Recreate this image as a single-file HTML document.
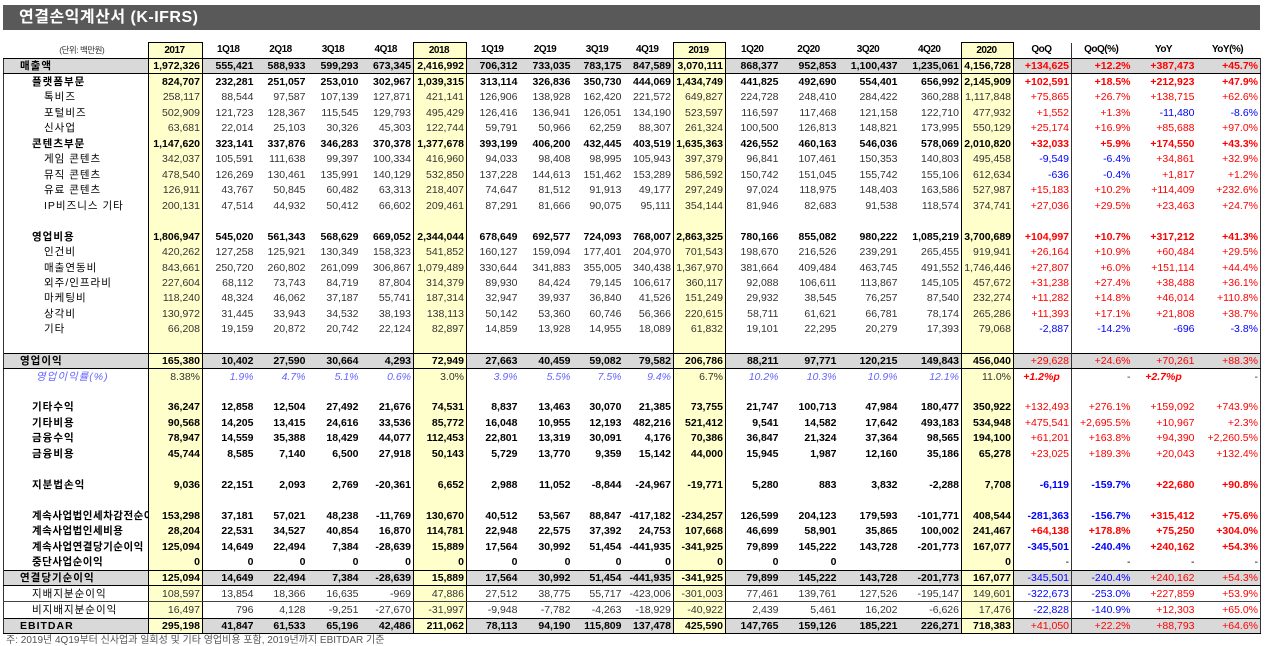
<!DOCTYPE html>
<html><head><meta charset="utf-8"><style>
body{margin:0;width:1266px;height:637px;background:#fff;overflow:hidden;position:relative;font-family:"Liberation Sans","Noto Sans CJK KR",sans-serif;}
.title{position:absolute;left:3px;top:5px;width:1257px;height:25px;background:#595959;color:#fff;font-weight:bold;font-size:16px;line-height:25px;padding-left:16px;box-sizing:border-box;letter-spacing:0.5px}
table{position:absolute;left:3px;top:42px;border-collapse:collapse;table-layout:fixed;width:1257px;font-size:10.5px;}
td{height:15.47px;padding:0 2px 0 0;text-align:right;white-space:nowrap;overflow:hidden;line-height:14px;color:#333}
tr.h td{height:15px;font-weight:bold;text-align:center;color:#000;font-size:10px;letter-spacing:-0.5px}
td:first-child{text-align:left;color:#000;letter-spacing:1px}
td:nth-child(2),td:nth-child(7),td:nth-child(12),td:nth-child(17){background:#ffffcc;border-left:1px solid #000;border-right:1px solid #000}
td:nth-child(19){border-left:1px solid #333}
td:last-child{border-right:1px solid #333}
td:first-child{border-left:1px solid #333}
tr.b td{font-weight:bold;color:#000}
tr.g td{background:#d9d9d9;border-top:1.5px solid #000;border-bottom:1.5px solid #000;font-weight:bold;color:#000;height:14.2px}
tr.g td:nth-child(2),tr.g td:nth-child(7),tr.g td:nth-child(12),tr.g td:nth-child(17){background:#ffffcc}
tr.g td:first-child{padding-left:16px}
tr.l td{border-bottom:1px solid #444;height:14.97px}
.i1{padding-left:28px}.i2{padding-left:40px}
.r{color:#f00!important}.bl{color:#00f!important}
tr.m td{font-style:italic;color:#66f}
tr.m td:nth-child(2),tr.m td:nth-child(7),tr.m td:nth-child(12),tr.m td:nth-child(17){color:#333;font-style:normal}
.foot{position:absolute;left:6px;top:631px;font-size:10px;color:#555}
</style></head><body>
<div class="title">연결손익계산서 (K-IFRS)</div>
<table>
<colgroup><col style="width:145px"><col style="width:54px"><col style="width:53px"><col style="width:52px"><col style="width:53px"><col style="width:53px"><col style="width:53px"><col style="width:53px"><col style="width:53px"><col style="width:51px"><col style="width:50px"><col style="width:52px"><col style="width:55px"><col style="width:58px"><col style="width:61px"><col style="width:62px"><col style="width:52px"><col style="width:58px"><col style="width:61px"><col style="width:64px"><col style="width:64px"></colgroup>
<tr class="h"><td style="font-size:8.5px;font-weight:normal;color:#333;padding-left:14px;border-left:none">(단위: 백만원)</td><td style="border-top:1px solid #000">2017</td><td>1Q18</td><td>2Q18</td><td>3Q18</td><td>4Q18</td><td style="border-top:1px solid #000">2018</td><td>1Q19</td><td>2Q19</td><td>3Q19</td><td>4Q19</td><td style="border-top:1px solid #000">2019</td><td>1Q20</td><td>2Q20</td><td>3Q20</td><td>4Q20</td><td style="border-top:1px solid #000">2020</td><td>QoQ</td><td>QoQ(%)</td><td style="border-left:none">YoY</td><td style="border-right:none">YoY(%)</td></tr>
<tr class="g"><td>매출액</td><td>1,972,326</td><td>555,421</td><td>588,933</td><td>599,293</td><td>673,345</td><td>2,416,992</td><td>706,312</td><td>733,035</td><td>783,175</td><td>847,589</td><td>3,070,111</td><td>868,377</td><td>952,853</td><td>1,100,437</td><td>1,235,061</td><td>4,156,728</td><td class="r">+134,625</td><td class="r">+12.2%</td><td class="r">+387,473</td><td class="r">+45.7%</td></tr>
<tr class="b"><td class="i1">플랫폼부문</td><td>824,707</td><td>232,281</td><td>251,057</td><td>253,010</td><td>302,967</td><td>1,039,315</td><td>313,114</td><td>326,836</td><td>350,730</td><td>444,069</td><td>1,434,749</td><td>441,825</td><td>492,690</td><td>554,401</td><td>656,992</td><td>2,145,909</td><td class="r">+102,591</td><td class="r">+18.5%</td><td class="r">+212,923</td><td class="r">+47.9%</td></tr>
<tr><td class="i2">톡비즈</td><td>258,117</td><td>88,544</td><td>97,587</td><td>107,139</td><td>127,871</td><td>421,141</td><td>126,906</td><td>138,928</td><td>162,420</td><td>221,572</td><td>649,827</td><td>224,728</td><td>248,410</td><td>284,422</td><td>360,288</td><td>1,117,848</td><td class="r">+75,865</td><td class="r">+26.7%</td><td class="r">+138,715</td><td class="r">+62.6%</td></tr>
<tr><td class="i2">포털비즈</td><td>502,909</td><td>121,723</td><td>128,367</td><td>115,545</td><td>129,793</td><td>495,429</td><td>126,416</td><td>136,941</td><td>126,051</td><td>134,190</td><td>523,597</td><td>116,597</td><td>117,468</td><td>121,158</td><td>122,710</td><td>477,932</td><td class="r">+1,552</td><td class="r">+1.3%</td><td class="bl">-11,480</td><td class="bl">-8.6%</td></tr>
<tr><td class="i2">신사업</td><td>63,681</td><td>22,014</td><td>25,103</td><td>30,326</td><td>45,303</td><td>122,744</td><td>59,791</td><td>50,966</td><td>62,259</td><td>88,307</td><td>261,324</td><td>100,500</td><td>126,813</td><td>148,821</td><td>173,995</td><td>550,129</td><td class="r">+25,174</td><td class="r">+16.9%</td><td class="r">+85,688</td><td class="r">+97.0%</td></tr>
<tr class="b"><td class="i1">콘텐츠부문</td><td>1,147,620</td><td>323,141</td><td>337,876</td><td>346,283</td><td>370,378</td><td>1,377,678</td><td>393,199</td><td>406,200</td><td>432,445</td><td>403,519</td><td>1,635,363</td><td>426,552</td><td>460,163</td><td>546,036</td><td>578,069</td><td>2,010,820</td><td class="r">+32,033</td><td class="r">+5.9%</td><td class="r">+174,550</td><td class="r">+43.3%</td></tr>
<tr><td class="i2">게임 콘텐츠</td><td>342,037</td><td>105,591</td><td>111,638</td><td>99,397</td><td>100,334</td><td>416,960</td><td>94,033</td><td>98,408</td><td>98,995</td><td>105,943</td><td>397,379</td><td>96,841</td><td>107,461</td><td>150,353</td><td>140,803</td><td>495,458</td><td class="bl">-9,549</td><td class="bl">-6.4%</td><td class="r">+34,861</td><td class="r">+32.9%</td></tr>
<tr><td class="i2">뮤직 콘텐츠</td><td>478,540</td><td>126,269</td><td>130,461</td><td>135,991</td><td>140,129</td><td>532,850</td><td>137,228</td><td>144,613</td><td>151,462</td><td>153,289</td><td>586,592</td><td>150,742</td><td>151,045</td><td>155,742</td><td>155,106</td><td>612,634</td><td class="bl">-636</td><td class="bl">-0.4%</td><td class="r">+1,817</td><td class="r">+1.2%</td></tr>
<tr><td class="i2">유료 콘텐츠</td><td>126,911</td><td>43,767</td><td>50,845</td><td>60,482</td><td>63,313</td><td>218,407</td><td>74,647</td><td>81,512</td><td>91,913</td><td>49,177</td><td>297,249</td><td>97,024</td><td>118,975</td><td>148,403</td><td>163,586</td><td>527,987</td><td class="r">+15,183</td><td class="r">+10.2%</td><td class="r">+114,409</td><td class="r">+232.6%</td></tr>
<tr><td class="i2">IP비즈니스 기타</td><td>200,131</td><td>47,514</td><td>44,932</td><td>50,412</td><td>66,602</td><td>209,461</td><td>87,291</td><td>81,666</td><td>90,075</td><td>95,111</td><td>354,144</td><td>81,946</td><td>82,683</td><td>91,538</td><td>118,574</td><td>374,741</td><td class="r">+27,036</td><td class="r">+29.5%</td><td class="r">+23,463</td><td class="r">+24.7%</td></tr>
<tr><td></td><td></td><td></td><td></td><td></td><td></td><td></td><td></td><td></td><td></td><td></td><td></td><td></td><td></td><td></td><td></td><td></td><td></td><td></td><td></td><td></td></tr>
<tr class="b"><td class="i1">영업비용</td><td>1,806,947</td><td>545,020</td><td>561,343</td><td>568,629</td><td>669,052</td><td>2,344,044</td><td>678,649</td><td>692,577</td><td>724,093</td><td>768,007</td><td>2,863,325</td><td>780,166</td><td>855,082</td><td>980,222</td><td>1,085,219</td><td>3,700,689</td><td class="r">+104,997</td><td class="r">+10.7%</td><td class="r">+317,212</td><td class="r">+41.3%</td></tr>
<tr><td class="i2">인건비</td><td>420,262</td><td>127,258</td><td>125,921</td><td>130,349</td><td>158,323</td><td>541,852</td><td>160,127</td><td>159,094</td><td>177,401</td><td>204,970</td><td>701,543</td><td>198,670</td><td>216,526</td><td>239,291</td><td>265,455</td><td>919,941</td><td class="r">+26,164</td><td class="r">+10.9%</td><td class="r">+60,484</td><td class="r">+29.5%</td></tr>
<tr><td class="i2">매출연동비</td><td>843,661</td><td>250,720</td><td>260,802</td><td>261,099</td><td>306,867</td><td>1,079,489</td><td>330,644</td><td>341,883</td><td>355,005</td><td>340,438</td><td>1,367,970</td><td>381,664</td><td>409,484</td><td>463,745</td><td>491,552</td><td>1,746,446</td><td class="r">+27,807</td><td class="r">+6.0%</td><td class="r">+151,114</td><td class="r">+44.4%</td></tr>
<tr><td class="i2">외주/인프라비</td><td>227,604</td><td>68,112</td><td>73,743</td><td>84,719</td><td>87,804</td><td>314,379</td><td>89,930</td><td>84,424</td><td>79,145</td><td>106,617</td><td>360,117</td><td>92,088</td><td>106,611</td><td>113,867</td><td>145,105</td><td>457,672</td><td class="r">+31,238</td><td class="r">+27.4%</td><td class="r">+38,488</td><td class="r">+36.1%</td></tr>
<tr><td class="i2">마케팅비</td><td>118,240</td><td>48,324</td><td>46,062</td><td>37,187</td><td>55,741</td><td>187,314</td><td>32,947</td><td>39,937</td><td>36,840</td><td>41,526</td><td>151,249</td><td>29,932</td><td>38,545</td><td>76,257</td><td>87,540</td><td>232,274</td><td class="r">+11,282</td><td class="r">+14.8%</td><td class="r">+46,014</td><td class="r">+110.8%</td></tr>
<tr><td class="i2">상각비</td><td>130,972</td><td>31,445</td><td>33,943</td><td>34,532</td><td>38,193</td><td>138,113</td><td>50,142</td><td>53,360</td><td>60,746</td><td>56,366</td><td>220,615</td><td>58,711</td><td>61,621</td><td>66,781</td><td>78,174</td><td>265,286</td><td class="r">+11,393</td><td class="r">+17.1%</td><td class="r">+21,808</td><td class="r">+38.7%</td></tr>
<tr><td class="i2">기타</td><td>66,208</td><td>19,159</td><td>20,872</td><td>20,742</td><td>22,124</td><td>82,897</td><td>14,859</td><td>13,928</td><td>14,955</td><td>18,089</td><td>61,832</td><td>19,101</td><td>22,295</td><td>20,279</td><td>17,393</td><td>79,068</td><td class="bl">-2,887</td><td class="bl">-14.2%</td><td class="bl">-696</td><td class="bl">-3.8%</td></tr>
<tr><td></td><td></td><td></td><td></td><td></td><td></td><td></td><td></td><td></td><td></td><td></td><td></td><td></td><td></td><td></td><td></td><td></td><td></td><td></td><td></td><td></td></tr>
<tr class="g"><td>영업이익</td><td>165,380</td><td>10,402</td><td>27,590</td><td>30,664</td><td>4,293</td><td>72,949</td><td>27,663</td><td>40,459</td><td>59,082</td><td>79,582</td><td>206,786</td><td>88,211</td><td>97,771</td><td>120,215</td><td>149,843</td><td>456,040</td><td class="r" style="font-weight:normal">+29,628</td><td class="r" style="font-weight:normal">+24.6%</td><td class="r" style="font-weight:normal">+70,261</td><td class="r" style="font-weight:normal">+88.3%</td></tr>
<tr class="m"><td class="i1" style="color:#66f;padding-left:32px">영업이익률(%)</td><td>8.38%</td><td>1.9%</td><td>4.7%</td><td>5.1%</td><td>0.6%</td><td>3.0%</td><td>3.9%</td><td>5.5%</td><td>7.5%</td><td>9.4%</td><td>6.7%</td><td>10.2%</td><td>10.3%</td><td>10.9%</td><td>12.1%</td><td>11.0%</td><td class="r" style="font-weight:bold;text-align:center">+1.2%p</td><td style="color:#333;font-style:normal">-</td><td class="r" style="font-weight:bold;text-align:center">+2.7%p</td><td style="color:#333;font-style:normal">-</td></tr>
<tr><td></td><td></td><td></td><td></td><td></td><td></td><td></td><td></td><td></td><td></td><td></td><td></td><td></td><td></td><td></td><td></td><td></td><td></td><td></td><td></td><td></td></tr>
<tr class="b"><td class="i1">기타수익</td><td>36,247</td><td>12,858</td><td>12,504</td><td>27,492</td><td>21,676</td><td>74,531</td><td>8,837</td><td>13,463</td><td>30,070</td><td>21,385</td><td>73,755</td><td>21,747</td><td>100,713</td><td>47,984</td><td>180,477</td><td>350,922</td><td class="r" style="font-weight:normal">+132,493</td><td class="r" style="font-weight:normal">+276.1%</td><td class="r" style="font-weight:normal">+159,092</td><td class="r" style="font-weight:normal">+743.9%</td></tr>
<tr class="b"><td class="i1">기타비용</td><td>90,568</td><td>14,205</td><td>13,415</td><td>24,616</td><td>33,536</td><td>85,772</td><td>16,048</td><td>10,955</td><td>12,193</td><td>482,216</td><td>521,412</td><td>9,541</td><td>14,582</td><td>17,642</td><td>493,183</td><td>534,948</td><td class="r" style="font-weight:normal">+475,541</td><td class="r" style="font-weight:normal">+2,695.5%</td><td class="r" style="font-weight:normal">+10,967</td><td class="r" style="font-weight:normal">+2.3%</td></tr>
<tr class="b"><td class="i1">금융수익</td><td>78,947</td><td>14,559</td><td>35,388</td><td>18,429</td><td>44,077</td><td>112,453</td><td>22,801</td><td>13,319</td><td>30,091</td><td>4,176</td><td>70,386</td><td>36,847</td><td>21,324</td><td>37,364</td><td>98,565</td><td>194,100</td><td class="r" style="font-weight:normal">+61,201</td><td class="r" style="font-weight:normal">+163.8%</td><td class="r" style="font-weight:normal">+94,390</td><td class="r" style="font-weight:normal">+2,260.5%</td></tr>
<tr class="b"><td class="i1">금융비용</td><td>45,744</td><td>8,585</td><td>7,140</td><td>6,500</td><td>27,918</td><td>50,143</td><td>5,729</td><td>13,770</td><td>9,359</td><td>15,142</td><td>44,000</td><td>15,945</td><td>1,987</td><td>12,160</td><td>35,186</td><td>65,278</td><td class="r" style="font-weight:normal">+23,025</td><td class="r" style="font-weight:normal">+189.3%</td><td class="r" style="font-weight:normal">+20,043</td><td class="r" style="font-weight:normal">+132.4%</td></tr>
<tr><td></td><td></td><td></td><td></td><td></td><td></td><td></td><td></td><td></td><td></td><td></td><td></td><td></td><td></td><td></td><td></td><td></td><td></td><td></td><td></td><td></td></tr>
<tr class="b"><td class="i1">지분법손익</td><td>9,036</td><td>22,151</td><td>2,093</td><td>2,769</td><td>-20,361</td><td>6,652</td><td>2,988</td><td>11,052</td><td>-8,844</td><td>-24,967</td><td>-19,771</td><td>5,280</td><td>883</td><td>3,832</td><td>-2,288</td><td>7,708</td><td class="bl">-6,119</td><td class="bl">-159.7%</td><td class="r">+22,680</td><td class="r">+90.8%</td></tr>
<tr><td></td><td></td><td></td><td></td><td></td><td></td><td></td><td></td><td></td><td></td><td></td><td></td><td></td><td></td><td></td><td></td><td></td><td></td><td></td><td></td><td></td></tr>
<tr class="b"><td class="i1" style="letter-spacing:0.5px">계속사업법인세차감전순이익</td><td>153,298</td><td>37,181</td><td>57,021</td><td>48,238</td><td>-11,769</td><td>130,670</td><td>40,512</td><td>53,567</td><td>88,847</td><td>-417,182</td><td>-234,257</td><td>126,599</td><td>204,123</td><td>179,593</td><td>-101,771</td><td>408,544</td><td class="bl">-281,363</td><td class="bl">-156.7%</td><td class="r">+315,412</td><td class="r">+75.6%</td></tr>
<tr class="b"><td class="i1" style="letter-spacing:0.5px">계속사업법인세비용</td><td>28,204</td><td>22,531</td><td>34,527</td><td>40,854</td><td>16,870</td><td>114,781</td><td>22,948</td><td>22,575</td><td>37,392</td><td>24,753</td><td>107,668</td><td>46,699</td><td>58,901</td><td>35,865</td><td>100,002</td><td>241,467</td><td class="r">+64,138</td><td class="r">+178.8%</td><td class="r">+75,250</td><td class="r">+304.0%</td></tr>
<tr class="b"><td class="i1" style="letter-spacing:0.5px">계속사업연결당기순이익</td><td>125,094</td><td>14,649</td><td>22,494</td><td>7,384</td><td>-28,639</td><td>15,889</td><td>17,564</td><td>30,992</td><td>51,454</td><td>-441,935</td><td>-341,925</td><td>79,899</td><td>145,222</td><td>143,728</td><td>-201,773</td><td>167,077</td><td class="bl">-345,501</td><td class="bl">-240.4%</td><td class="r">+240,162</td><td class="r">+54.3%</td></tr>
<tr class="b"><td class="i1" style="letter-spacing:0.5px">중단사업순이익</td><td>0</td><td>0</td><td>0</td><td>0</td><td>0</td><td>0</td><td>0</td><td>0</td><td>0</td><td>0</td><td>0</td><td>0</td><td>0</td><td></td><td></td><td>0</td><td style="font-weight:normal">-</td><td style="font-weight:normal">-</td><td style="font-weight:normal">-</td><td style="font-weight:normal">-</td></tr>
<tr class="g"><td>연결당기순이익</td><td>125,094</td><td>14,649</td><td>22,494</td><td>7,384</td><td>-28,639</td><td>15,889</td><td>17,564</td><td>30,992</td><td>51,454</td><td>-441,935</td><td>-341,925</td><td>79,899</td><td>145,222</td><td>143,728</td><td>-201,773</td><td>167,077</td><td class="bl" style="font-weight:normal">-345,501</td><td class="bl" style="font-weight:normal">-240.4%</td><td class="r" style="font-weight:normal">+240,162</td><td class="r" style="font-weight:normal">+54.3%</td></tr>
<tr class="l"><td class="i1">지배지분순이익</td><td>108,597</td><td>13,854</td><td>18,366</td><td>16,635</td><td>-969</td><td>47,886</td><td>27,512</td><td>38,775</td><td>55,717</td><td>-423,006</td><td>-301,003</td><td>77,461</td><td>139,761</td><td>127,526</td><td>-195,147</td><td>149,601</td><td class="bl">-322,673</td><td class="bl">-253.0%</td><td class="r">+227,859</td><td class="r">+53.9%</td></tr>
<tr><td class="i1">비지배지분순이익</td><td>16,497</td><td>796</td><td>4,128</td><td>-9,251</td><td>-27,670</td><td>-31,997</td><td>-9,948</td><td>-7,782</td><td>-4,263</td><td>-18,929</td><td>-40,922</td><td>2,439</td><td>5,461</td><td>16,202</td><td>-6,626</td><td>17,476</td><td class="bl">-22,828</td><td class="bl">-140.9%</td><td class="r">+12,303</td><td class="r">+65.0%</td></tr>
<tr class="g"><td>EBITDAR</td><td>295,198</td><td>41,847</td><td>61,533</td><td>65,196</td><td>42,486</td><td>211,062</td><td>78,113</td><td>94,190</td><td>115,809</td><td>137,478</td><td>425,590</td><td>147,765</td><td>159,126</td><td>185,221</td><td>226,271</td><td>718,383</td><td class="r" style="font-weight:normal">+41,050</td><td class="r" style="font-weight:normal">+22.2%</td><td class="r" style="font-weight:normal">+88,793</td><td class="r" style="font-weight:normal">+64.6%</td></tr>
</table>
<div class="foot">주: 2019년 4Q19부터 신사업과 일회성 및 기타 영업비용 포함, 2019년까지 EBITDAR 기준</div>
</body></html>
